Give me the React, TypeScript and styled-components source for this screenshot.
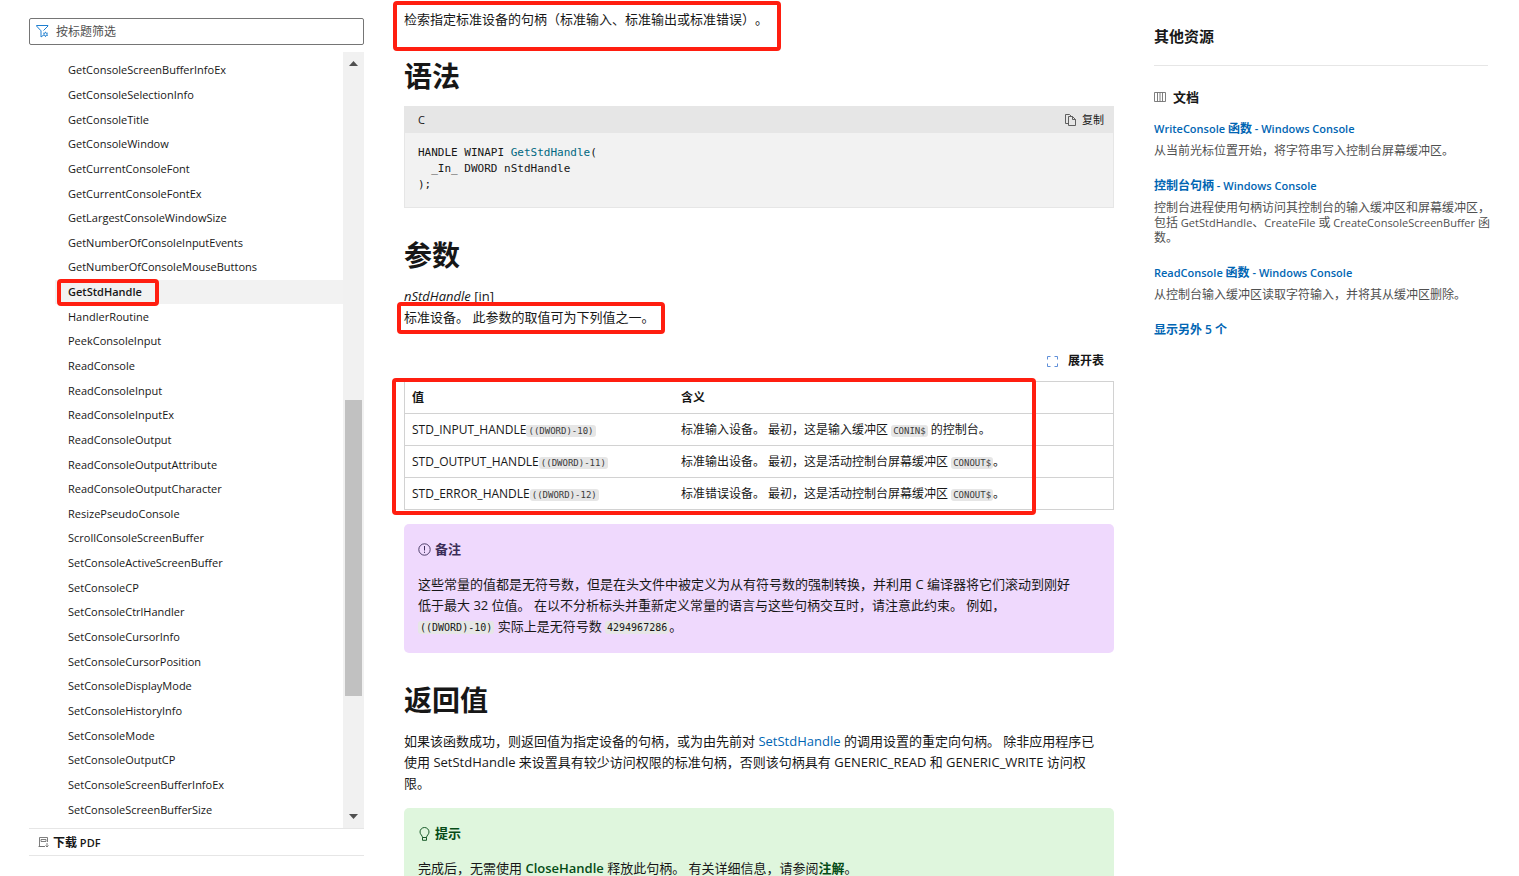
import React from "react";
import styled, { createGlobalStyle, css } from "styled-components";

const sans = `"Open Sans", "Noto Sans CJK SC", sans-serif`;
const mono = `"DejaVu Sans Mono", "Noto Sans CJK SC", monospace`;

const GlobalStyle = createGlobalStyle`
  * { box-sizing: border-box; }
  body { margin: 0; background: #fff; color: #171717; font: 13px/21px ${sans}; text-spacing-trim: space-all; }
  button, input { font-family: inherit; color: inherit; }
`;

const Page = styled.div`
  display: grid;
  grid-template-columns: minmax(0, 335fr) minmax(0, 710fr) minmax(0, 334fr);
  gap: 40px;
  height: 100vh;
  padding: 0 31px 0 29px;
  overflow: hidden;
`;

/* Latin runs are set one step smaller than the Han text around them */
const LatinRun = styled.span`
  font-size: 11px;
`;

const Mixed = ({ text }: { text: string }) => (
  <>
    {text.split(/([\x20-\x7e]+)/).map((run, i) => (i % 2 ? <LatinRun key={i}>{run}</LatinRun> : run))}
  </>
);

/* Left navigation */
const Sidebar = styled.nav`
  display: flex;
  flex-direction: column;
  height: 100vh;
  padding: 18px 0 20px;
`;

const Search = styled.label`
  display: flex;
  flex: none;
  align-items: center;
  gap: 7px;
  height: 27px;
  margin-bottom: 7px;
  padding: 0 6px;
  border: 1px solid #757575;
  border-radius: 2px;
`;

const SearchInput = styled.input`
  flex: 1;
  min-width: 0;
  padding: 0;
  border: 0;
  outline: 0;
  background: none;
  font-size: 12px;
  &::placeholder { color: #505050; opacity: 1; }
`;

const TocArea = styled.div`
  display: flex;
  flex: 1;
  min-height: 0;
`;

const TocList = styled.ul`
  display: flex;
  flex: 1;
  flex-direction: column;
  min-width: 0;
  margin: 0;
  padding: 6px 0 6px 26px;
  list-style: none;
`;

const TocItem = styled.li<{ $current?: boolean }>`
  position: relative;
  display: flex;
  flex: 1;
  align-items: center;
  min-height: 0;
  padding-left: 13px;
  background: ${(p) => (p.$current ? "#f2f2f2" : "none")};
  font-weight: ${(p) => (p.$current ? 600 : 400)};
`;

const TocLink = styled.a`
  color: #171717;
  font-size: 11px;
  line-height: 16px;
  text-decoration: none;
`;

const ScrollTrack = styled.div`
  display: flex;
  flex: none;
  flex-direction: column;
  align-items: center;
  width: 21px;
  padding: 9px 0;
  background: #f1f1f1;
`;

const ScrollSpace = styled.div<{ $grow: number }>`
  flex: ${(p) => p.$grow} 1 0;
`;

const ScrollThumb = styled.div`
  flex: 296 1 0;
  width: 17px;
  background: #c1c1c1;
`;

const Download = styled.button`
  display: flex;
  flex: none;
  align-items: center;
  gap: 4px;
  height: 28px;
  padding: 0 9px;
  border: 0;
  border-top: 1px solid #e6e6e6;
  border-bottom: 1px solid #e6e6e6;
  background: none;
  font-size: 12px;
  font-weight: 600;
`;

/* Article */
const Article = styled.main`
  min-width: 0;
  padding-top: 9px;
`;

const Heading = styled.h2`
  margin: 28px 0 12px;
  font-size: 28px;
  font-weight: 700;
  line-height: 36px;
`;

const Paragraph = styled.p`
  margin: 0;
  ${Heading} + & { margin-top: 13px; }
`;

const Marked = styled.div`
  position: relative;
`;

const Mark = styled.span<{ $top: number; $left: number; $width: string; $height: number }>`
  position: absolute;
  z-index: 1;
  top: ${(p) => p.$top}px;
  left: ${(p) => p.$left}px;
  width: ${(p) => p.$width};
  height: ${(p) => p.$height}px;
  border: 4px solid #ff1e10;
  border-radius: 4px;
  pointer-events: none;
`;

const CodeHeader = styled.div`
  display: flex;
  align-items: center;
  justify-content: space-between;
  height: 27px;
  padding: 0 10px 0 14px;
  background: #e6e6e6;
  font-size: 11px;
`;

const PlainButton = styled.button<{ $strong?: boolean }>`
  display: flex;
  align-items: center;
  gap: ${(p) => (p.$strong ? 10 : 6)}px;
  padding: 0;
  border: 0;
  background: none;
  font-size: ${(p) => (p.$strong ? 12 : 11)}px;
  font-weight: ${(p) => (p.$strong ? 600 : 400)};
  line-height: 16px;
`;

const CodeBlock = styled.pre`
  margin: 0 0 29px;
  padding: 12px 13px 14px;
  border: 1px solid #e6e6e6;
  border-top: 0;
  background: #f2f2f2;
  font: 11px/16px ${mono};
`;

const FunctionName = styled.span`
  color: #006881;
`;

const TableTools = styled.div`
  display: flex;
  justify-content: flex-end;
  margin: 25px 10px 12px 0;
`;

const Table = styled.table`
  width: 100%;
  border: 1px solid #d2d2d2;
  border-collapse: collapse;
  font-size: 12px;
  line-height: 16px;
  th, td {
    height: 32px;
    padding: 0 7px;
    border-top: 1px solid #d2d2d2;
    text-align: left;
  }
  td { padding-top: 2px; }
  th { font-weight: 600; }
  th:first-child { width: 38%; }
`;

const Code = styled.code<{ $small?: boolean }>`
  padding: 1px 2px;
  border-radius: 3px;
  background: #e6e6e6;
  font-family: ${mono};
  ${(p) => (p.$small ? css`color: #3b3b3b; font-size: 9px;` : css`font-size: 10px;`)}
`;

const Callout = styled.section<{ $tone: "note" | "tip" }>`
  margin: 14px 0 29px;
  padding: 15px 14px;
  border-radius: 5px;
  background: ${(p) => (p.$tone === "note" ? "#efd9fd" : "#dff6dd")};
  --tone: ${(p) => (p.$tone === "note" ? "#3b2e58" : "#054b16")};
`;

const CalloutTitle = styled.p`
  display: flex;
  align-items: center;
  gap: 4px;
  margin: 0 0 14px;
  color: var(--tone);
  font-weight: 600;
`;

const Link = styled.a<{ $tone?: boolean }>`
  color: ${(p) => (p.$tone ? "var(--tone)" : "#0065b3")};
  font-weight: ${(p) => (p.$tone ? 600 : 400)};
  text-decoration: none;
`;

/* Right column */
const Aside = styled.aside`
  min-width: 0;
  padding-top: 25px;
`;

const AsideTitle = styled.h2`
  margin: 0 0 18px;
  padding-bottom: 18px;
  border-bottom: 1px solid #e6e6e6;
  font-size: 15px;
  font-weight: 600;
  line-height: 22px;
`;

const GroupTitle = styled.h3`
  display: flex;
  align-items: center;
  gap: 7px;
  margin: 0 0 11px;
  font-size: 13px;
  font-weight: 600;
  line-height: 26px;
`;

const Resource = styled.div`
  margin-bottom: 20px;
  font-size: 12px;
`;

const ResourceLink = styled.a`
  display: block;
  margin-bottom: 6px;
  color: #0065b3;
  font-weight: 600;
  line-height: 16px;
  text-decoration: none;
`;

const ResourceText = styled.p`
  margin: 0;
  color: #505050;
  line-height: 15px;
  white-space: pre;
`;

const MoreButton = styled.button`
  display: block;
  padding: 0;
  border: 0;
  background: none;
  color: #0065b3;
  font-size: 12px;
  font-weight: 600;
  line-height: 16px;
`;

const FilterIcon = () => (
  <svg width="13" height="13" viewBox="0 0 13 13" fill="none" stroke="#1f7fd0" strokeWidth="1">
    <path d="M7.5 5.5 12 1V.5H.5V1L5 5.8V12l2-1.5" />
    <circle cx="9.5" cy="9.3" r="1.6" />
    <path d="M9.5 6.8v.9M9.5 10.9v.9M7.3 8l.8.5M10.9 10.1l.8.5M7.3 10.6l.8-.5M10.9 8.5l.8-.5" />
  </svg>
);

const PdfIcon = () => (
  <svg width="11" height="12" viewBox="0 0 11 12" fill="none" stroke="#707070">
    <path d="M9.5 6V1.5H1.5v9H7M.5 10.5h6M3 3.5h5v2H3zM9 7v4M7.5 9.5 9 11l1.5-1.5" strokeWidth=".9" />
  </svg>
);

const CopyIcon = () => (
  <svg width="11" height="12" viewBox="0 0 11 12" fill="none" stroke="#505050" strokeWidth=".9">
    <path d="M3.5 9.5h-3v-9h4l2 2M3.5 2.5h4l3 3v6h-7zM7.5 2.5v3h3" />
  </svg>
);

const ExpandIcon = () => (
  <svg width="11" height="11" viewBox="0 0 11 11" fill="none" stroke="#5f8fd8">
    <path d="M.5 3.5v-3h3M7.5.5h3v3M10.5 7.5v3h-3M3.5 10.5h-3v-3" />
  </svg>
);

const InfoIcon = () => (
  <svg width="13" height="13" viewBox="0 0 13 13" fill="none" stroke="currentColor">
    <circle cx="6.5" cy="6.5" r="5.7" strokeWidth=".9" />
    <path d="M6.5 3v4.5M6.5 8.7v1.2" />
  </svg>
);

const BulbIcon = () => (
  <svg width="13" height="14" viewBox="0 0 13 14" fill="none" stroke="currentColor" strokeWidth=".9">
    <path d="M4.500 10.500C4.500 8.500 2 7.500 2 5a4.500 4.500 0 0 1 9 0c0 2.500-2.500 3.500-2.500 5.500v2.800h-4zh4" />
  </svg>
);

const BookIcon = () => (
  <svg width="12" height="12" viewBox="0 0 12 12" fill="none" stroke="#707070" strokeWidth=".9">
    <path d="M6 10.500V1.500H.5v9h11v-9H6M3.500 1.500v9M8.500 1.500v9" />
  </svg>
);

const Arrow = ({ down }: { down?: boolean }) => (
  <svg width="9" height="5" viewBox="0 0 9 5" fill="#505050">
    <path d={down ? "M0 0h9L4.500 5z" : "M0 5h9L4.500 0z"} />
  </svg>
);

const tocNames = [
  "GetConsoleScreenBufferInfoEx",
  "GetConsoleSelectionInfo",
  "GetConsoleTitle",
  "GetConsoleWindow",
  "GetCurrentConsoleFont",
  "GetCurrentConsoleFontEx",
  "GetLargestConsoleWindowSize",
  "GetNumberOfConsoleInputEvents",
  "GetNumberOfConsoleMouseButtons",
  "GetStdHandle",
  "HandlerRoutine",
  "PeekConsoleInput",
  "ReadConsole",
  "ReadConsoleInput",
  "ReadConsoleInputEx",
  "ReadConsoleOutput",
  "ReadConsoleOutputAttribute",
  "ReadConsoleOutputCharacter",
  "ResizePseudoConsole",
  "ScrollConsoleScreenBuffer",
  "SetConsoleActiveScreenBuffer",
  "SetConsoleCP",
  "SetConsoleCtrlHandler",
  "SetConsoleCursorInfo",
  "SetConsoleCursorPosition",
  "SetConsoleDisplayMode",
  "SetConsoleHistoryInfo",
  "SetConsoleMode",
  "SetConsoleOutputCP",
  "SetConsoleScreenBufferInfoEx",
  "SetConsoleScreenBufferSize",
];

const handles = [
  { name: "STD_INPUT_HANDLE", value: "((DWORD)-10)", before: "标准输入设备。 最初，这是输入缓冲区 ", buffer: "CONIN$", after: " 的控制台。" },
  { name: "STD_OUTPUT_HANDLE", value: "((DWORD)-11)", before: "标准输出设备。 最初，这是活动控制台屏幕缓冲区 ", buffer: "CONOUT$", after: "。" },
  { name: "STD_ERROR_HANDLE", value: "((DWORD)-12)", before: "标准错误设备。 最初，这是活动控制台屏幕缓冲区 ", buffer: "CONOUT$", after: "。" },
];

const resources = [
  { title: "WriteConsole 函数 - Windows Console", text: "从当前光标位置开始，将字符串写入控制台屏幕缓冲区。" },
  {
    title: "控制台句柄 - Windows Console",
    text: "控制台进程使用句柄访问其控制台的输入缓冲区和屏幕缓冲区，\n包括 GetStdHandle、CreateFile 或 CreateConsoleScreenBuffer 函\n数。",
  },
  { title: "ReadConsole 函数 - Windows Console", text: "从控制台输入缓冲区读取字符输入，并将其从缓冲区删除。" },
];

export default function App() {
  return (
    <>
      <GlobalStyle />
      <Page lang="zh-CN">
        <Sidebar aria-label="目录">
          <Search>
            <FilterIcon />
            <SearchInput type="text" placeholder="按标题筛选" aria-label="按标题筛选" />
          </Search>
          <TocArea>
            <TocList>
              {tocNames.map((name) => {
                const current = name === "GetStdHandle";
                return (
                  <TocItem key={name} $current={current}>
                    <TocLink href="#" aria-current={current ? "page" : undefined}>{name}</TocLink>
                    {current && <Mark $top={-1} $left={2} $width="102px" $height={27} />}
                  </TocItem>
                );
              })}
            </TocList>
            <ScrollTrack aria-hidden="true">
              <Arrow />
              <ScrollSpace $grow={334} />
              <ScrollThumb />
              <ScrollSpace $grow={118} />
              <Arrow down />
            </ScrollTrack>
          </TocArea>
          <Download type="button">
            <PdfIcon />
            <span>
              <Mixed text="下载 PDF" />
            </span>
          </Download>
        </Sidebar>

        <Article>
          <Marked>
            <Paragraph>检索指定标准设备的句柄（标准输入、标准输出或标准错误）。</Paragraph>
            <Mark $top={-8} $left={-11} $width="388px" $height={50} />
          </Marked>

          <Heading>语法</Heading>
          <CodeHeader>
            <span>C</span>
            <PlainButton type="button">
              <CopyIcon />
              复制
            </PlainButton>
          </CodeHeader>
          <CodeBlock>
            {"HANDLE WINAPI "}
            <FunctionName>GetStdHandle</FunctionName>
            {"(\n  _In_ DWORD nStdHandle\n);"}
          </CodeBlock>

          <Heading>参数</Heading>
          <Paragraph>
            <em>nStdHandle</em> [in]
          </Paragraph>
          <Marked>
            <Paragraph>标准设备。 此参数的取值可为下列值之一。</Paragraph>
            <Mark $top={-5} $left={-7} $width="268px" $height={32} />
          </Marked>

          <TableTools>
            <PlainButton type="button" $strong>
              <ExpandIcon />
              展开表
            </PlainButton>
          </TableTools>
          <Marked>
            <Table>
              <thead>
                <tr>
                  <th scope="col">值</th>
                  <th scope="col">含义</th>
                </tr>
              </thead>
              <tbody>
                {handles.map((h) => (
                  <tr key={h.name}>
                    <td>
                      {h.name}
                      <Code $small>{h.value}</Code>
                    </td>
                    <td>
                      {h.before}
                      <Code $small>{h.buffer}</Code>
                      {h.after}
                    </td>
                  </tr>
                ))}
              </tbody>
            </Table>
            <Mark $top={-3} $left={-12} $width="calc(91% - 2px)" $height={137} />
          </Marked>

          <Callout $tone="note">
            <CalloutTitle>
              <InfoIcon />
              备注
            </CalloutTitle>
            <Paragraph>
              这些常量的值都是无符号数，但是在头文件中被定义为从有符号数的强制转换，并利用 C 编译器将它们滚动到刚好
              <br />
              低于最大 32 位值。 在以不分析标头并重新定义常量的语言与这些句柄交互时，请注意此约束。 例如，
              <br />
              <Code>((DWORD)-10)</Code> 实际上是无符号数 <Code>4294967286</Code>。
            </Paragraph>
          </Callout>

          <Heading>返回值</Heading>
          <Paragraph>
            如果该函数成功，则返回值为指定设备的句柄，或为由先前对 <Link href="#">SetStdHandle</Link>{" "}
            的调用设置的重定向句柄。 除非应用程序已
            <br />
            使用 SetStdHandle 来设置具有较少访问权限的标准句柄，否则该句柄具有 GENERIC_READ 和 GENERIC_WRITE 访问权
            <br />
            限。
          </Paragraph>

          <Callout $tone="tip">
            <CalloutTitle>
              <BulbIcon />
              提示
            </CalloutTitle>
            <Paragraph>
              完成后，无需使用 <Link href="#" $tone>CloseHandle</Link> 释放此句柄。 有关详细信息，请参阅
              <Link href="#" $tone>注解</Link>。
            </Paragraph>
          </Callout>
        </Article>

        <Aside>
          <AsideTitle>其他资源</AsideTitle>
          <GroupTitle>
            <BookIcon />
            文档
          </GroupTitle>
          {resources.map((r) => (
            <Resource key={r.title}>
              <ResourceLink href="#">
                <Mixed text={r.title} />
              </ResourceLink>
              <ResourceText>
                <Mixed text={r.text} />
              </ResourceText>
            </Resource>
          ))}
          <MoreButton type="button">显示另外 5 个</MoreButton>
        </Aside>
      </Page>
    </>
  );
}
